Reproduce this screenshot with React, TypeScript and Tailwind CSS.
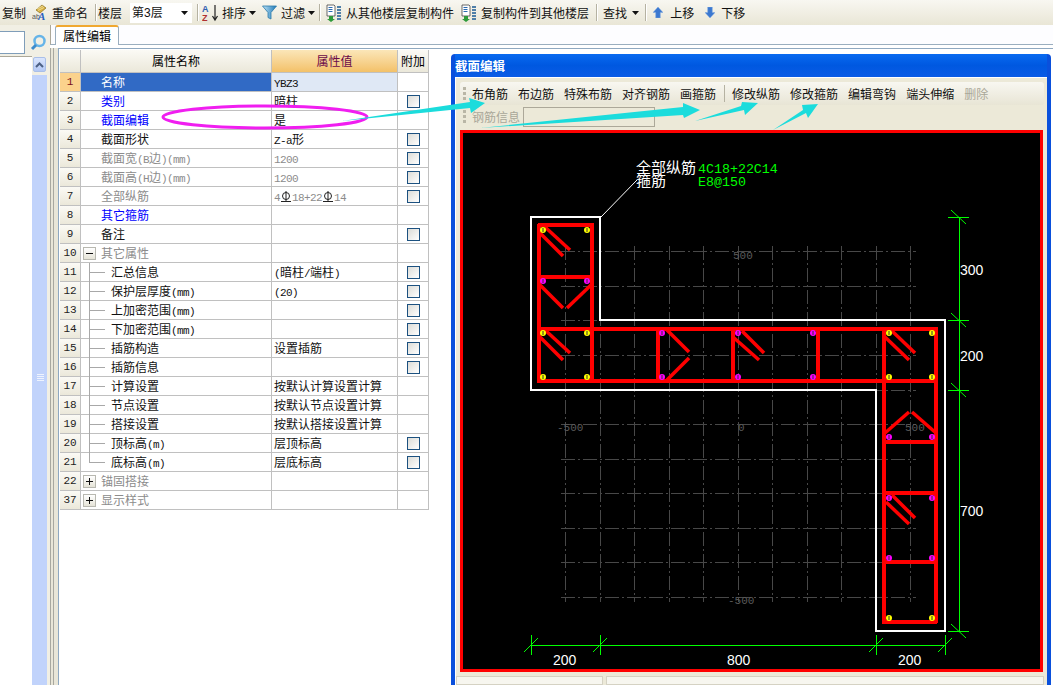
import React from "react";

const FONT = "font-['Noto_Sans_CJK_SC','Liberation_Sans',sans-serif]";

function T({ children }: { children: string }) {
  const parts = children.split(/([\x00-\x7f]+)/).filter(Boolean);
  return (
    <>
      {parts.map((p, i) =>
        /^[\x00-\x7f]+$/.test(p) ? (
          <span key={i} className="font-['Liberation_Mono',monospace] text-[11px] tracking-[-0.6px]">{p}</span>
        ) : (
          <span key={i}>{p}</span>
        )
      )}
    </>
  );
}

const Sep = ({ className = "" }: { className?: string }) => (
  <div className={`h-[17px] w-[2px] border-l border-r border-l-[#b5b2a2] border-r-white ${className}`} />
);
const Caret = ({ className = "" }: { className?: string }) => (
  <svg width="7" height="4" viewBox="0 0 7 4" className={className}><path d="M0 0h7L3.5 4z" fill="#111" /></svg>
);

const RenameIcon = () => (
  <svg width="17" height="17" viewBox="0 0 17 17">
    <path d="M4 6 10 1l4 3-6 5z" fill="#d9b040" stroke="#8a7020" strokeWidth=".7" />
    <path d="M5 5l6-3M6 6.500l6-3" stroke="#f3e6a8" strokeWidth=".8" />
    <text x="0" y="15" fontSize="7" fontFamily="Liberation Sans" fill="#555">ab</text>
    <text x="6" y="16" fontSize="11" fontWeight="700" fontStyle="italic" fontFamily="Liberation Serif" fill="#2860c0">A</text>
  </svg>
);
const SortIcon = () => (
  <svg width="17" height="18" viewBox="0 0 17 18">
    <text x="0" y="8" fontSize="9" fontWeight="700" fontFamily="Liberation Sans" fill="#3060b0">A</text>
    <text x="0" y="17" fontSize="9" fontWeight="700" fontFamily="Liberation Sans" fill="#b03030">Z</text>
    <path d="M13 1v14M10.500 12l2.500 4 2.500-4" stroke="#222" strokeWidth="1.200" fill="none" />
  </svg>
);
const FilterIcon = () => (
  <svg width="15" height="15" viewBox="0 0 15 15">
    <defs>
      <linearGradient id="fg" x1="0" x2="1"><stop offset="0" stopColor="#bfe4f6" /><stop offset="1" stopColor="#1d78b8" /></linearGradient>
    </defs>
    <path d="M.5 1h14L9 7.500V14l-3-1.500v-5z" fill="url(#fg)" stroke="#2a79a8" strokeWidth=".8" />
  </svg>
);
const CopyIcon = () => (
  <svg width="16" height="18" viewBox="0 0 16 18">
    <path d="M1 1h7l1 1v10H1z" fill="#fff" stroke="#444" strokeWidth=".8" />
    <path d="M2.500 3.500h4M2.500 5.500h4M2.500 7.500h4" stroke="#2a6ab0" />
    <path d="M3 12h4v3h2l-4 3-4-3h2z" fill="#2d9a3a" />
    <path d="M11 3h4M11 6h4M11 9h4M11 12h4M11 15h4" stroke="#4f7fa8" strokeWidth="2" />
  </svg>
);
const ArrowIcon = ({ down }: { down?: boolean }) => (
  <svg width="10" height="11" viewBox="0 0 10 11" style={{ transform: down ? "rotate(180deg)" : undefined }}>
    <path d="M5 0l5 5.500H7.300V11H2.700V5.500H0z" fill="#3b78d0" stroke="#7fa8e0" strokeWidth=".5" />
  </svg>
);

function Toolbar() {
  return (
    <div className="h-[25px] shrink-0 flex items-center bg-gradient-to-b from-[#f8f7f1] to-[#e9e6d6] text-[12px] text-[#111] whitespace-nowrap">
      <span className="ml-[2px]">复制</span>
      <span className="ml-[6px] flex"><RenameIcon /></span>
      <span className="ml-[3px]">重命名</span>
      <Sep className="ml-[7px]" />
      <span className="ml-[1px]">楼层</span>
      <div className="ml-[8px] w-[62px] h-[20px] bg-white flex items-center justify-between pl-[2px] pr-[4px]">
        <span>第<span className="font-['Liberation_Sans']">3</span>层</span>
        <Caret />
      </div>
      <Sep className="ml-[5px]" />
      <span className="ml-[3px] flex"><SortIcon /></span>
      <span className="ml-[3px]">排序</span>
      <Caret className="ml-[3px]" />
      <span className="ml-[6px] flex"><FilterIcon /></span>
      <span className="ml-[4px]">过滤</span>
      <Caret className="ml-[3px]" />
      <Sep className="ml-[4px]" />
      <span className="ml-[5px] flex"><CopyIcon /></span>
      <span className="ml-[4px]">从其他楼层复制构件</span>
      <span className="ml-[7px] flex"><CopyIcon /></span>
      <span className="ml-[4px]">复制构件到其他楼层</span>
      <Sep className="ml-[7px]" />
      <span className="ml-[5px]">查找</span>
      <Caret className="ml-[5px]" />
      <Sep className="ml-[6px]" />
      <span className="ml-[6px] flex"><ArrowIcon /></span>
      <span className="ml-[7px]">上移</span>
      <span className="ml-[11px] flex"><ArrowIcon down /></span>
      <span className="ml-[6px]">下移</span>
    </div>
  );
}

function LeftPanel() {
  return (
    <div className="w-[50px] shrink-0 flex flex-col bg-[#f1efe4]">
      <div className="h-[31px] shrink-0 flex items-end pb-[2px]">
        <div className="w-[25px] h-[23px] bg-white border border-l-0 border-[#7f9db9]" />
        <svg width="17" height="17" viewBox="0 0 17 17" className="ml-[5px] mb-[3px]">
          <circle cx="9.500" cy="7" r="5" fill="none" stroke="#66b4e8" strokeWidth="2.500" />
          <path d="M6 11l-4 4" stroke="#3d8ccc" strokeWidth="3" />
        </svg>
      </div>
      <div className="flex-1 flex min-h-0">
        <div className="w-[32px] bg-white border-t border-[#aca899]" />
        <div className="w-[15px] flex flex-col pt-[1px] gap-[3px]">
          <div className="h-[15px] mx-[1px] rounded-[2px] bg-gradient-to-b from-[#dbe6fd] to-[#b3c8f5] border border-[#a9bfe8] flex items-center justify-center">
            <svg width="9" height="6" viewBox="0 0 9 6"><path d="M1 5l3.500-3.500L8 5" fill="none" stroke="#4d6185" strokeWidth="2" /></svg>
          </div>
          <div className="flex-1 bg-[#c1d3fb] flex items-center justify-center pl-[1px]">
            <div className="w-[7px] flex flex-col gap-[1px] mt-[-6px]">
              {[0, 1, 2, 3].map((i) => <div key={i} className="h-px bg-[#eef3fe]" />)}
            </div>
          </div>
        </div>
      </div>
    </div>
  );
}

type Row = {
  n: number;
  name: string;
  val?: React.ReactNode;
  c?: "blue" | "gray" | "black";
  vc?: "gray";
  check?: boolean;
  kind?: "child" | "last" | "minus" | "plus";
  sel?: boolean;
};

const Rebar = () => (
  <svg width="10" height="12" viewBox="0 0 10 12" className="inline-block mx-[1px] align-[-2px]">
    <circle cx="5" cy="5" r="3.500" fill="none" stroke="#222" />
    <path d="M5 0v10M0 10.500h10" stroke="#222" />
  </svg>
);

const rows: Row[] = [
  { n: 1, name: "名称", val: "YBZ3", sel: true },
  { n: 2, name: "类别", val: "暗柱", c: "blue", check: true },
  { n: 3, name: "截面编辑", val: "是", c: "blue" },
  { n: 4, name: "截面形状", val: "Z-a形", check: true },
  { n: 5, name: "截面宽(B边)(mm)", val: "1200", c: "gray", vc: "gray", check: true },
  { n: 6, name: "截面高(H边)(mm)", val: "1200", c: "gray", vc: "gray", check: true },
  { n: 7, name: "全部纵筋", val: <>4<Rebar />18+22<Rebar />14</>, c: "gray", vc: "gray", check: true },
  { n: 8, name: "其它箍筋", c: "blue" },
  { n: 9, name: "备注", check: true },
  { n: 10, name: "其它属性", c: "gray", kind: "minus" },
  { n: 11, name: "汇总信息", val: "(暗柱/端柱)", check: true, kind: "child" },
  { n: 12, name: "保护层厚度(mm)", val: "(20)", check: true, kind: "child" },
  { n: 13, name: "上加密范围(mm)", check: true, kind: "child" },
  { n: 14, name: "下加密范围(mm)", check: true, kind: "child" },
  { n: 15, name: "插筋构造", val: "设置插筋", check: true, kind: "child" },
  { n: 16, name: "插筋信息", check: true, kind: "child" },
  { n: 17, name: "计算设置", val: "按默认计算设置计算", kind: "child" },
  { n: 18, name: "节点设置", val: "按默认节点设置计算", kind: "child" },
  { n: 19, name: "搭接设置", val: "按默认搭接设置计算", kind: "child" },
  { n: 20, name: "顶标高(m)", val: "层顶标高", check: true, kind: "child" },
  { n: 21, name: "底标高(m)", val: "层底标高", check: true, kind: "last" },
  { n: 22, name: "锚固搭接", c: "gray", kind: "plus" },
  { n: 37, name: "显示样式", c: "gray", kind: "plus" },
];

const Check = () => (
  <div className="w-[13px] h-[13px] border border-[#1c5180] bg-gradient-to-br from-[#dcdcd7] to-white" />
);

const Box = ({ plus }: { plus?: boolean }) => (
  <div className="absolute left-[2px] top-[3px] w-[13px] h-[13px] border border-[#b8b8b0] bg-gradient-to-b from-white to-[#e6e4d8] flex items-center justify-center">
    <svg width="9" height="9" viewBox="0 0 9 9">
      <path d={plus ? "M1 4.500h7M4.500 1v7" : "M1 4.500h7"} stroke="#111" />
    </svg>
  </div>
);

function PropTable() {
  return (
    <div className="w-[369px] text-[12px] leading-[18px]">
      <div className="flex h-[23px] border-b border-[#c0c0c0]">
        <div className="w-[21px] shrink-0 border-r border-[#c0c0c0] bg-gradient-to-b from-[#fbfaf5] to-[#ebe8da]" />
        <div className="w-[191px] shrink-0 border-r border-[#c0c0c0] bg-gradient-to-b from-[#fbfaf5] to-[#ebe8da] flex items-center justify-center">属性名称</div>
        <div className="w-[125px] shrink-0 bg-gradient-to-b from-[#fbe6b8] to-[#f3c168] flex items-center justify-center text-[#6a0a4a]">属性值</div>
        <div className="w-[32px] shrink-0 border-x border-[#c0c0c0] bg-gradient-to-b from-[#fbfaf5] to-[#ebe8da] flex items-center justify-center">附加</div>
      </div>
      {rows.map((r) => {
        const tree = r.kind === "child" || r.kind === "last";
        const color = r.sel ? "text-white" : r.c === "blue" ? "text-[#0000ff]" : r.c === "gray" ? "text-[#8c8c8c]" : "text-[#111]";
        return (
          <div key={r.n} className="flex h-[19px] border-b border-[#c0c0c0]">
            <div className={`w-[21px] shrink-0 border-r border-[#c0c0c0] flex items-center justify-center font-['Liberation_Mono',monospace] text-[11px] ${r.sel ? "bg-[#fbd28c] text-[#7a1020]" : "bg-gradient-to-b from-[#fbfaf5] to-[#ebe8da] text-[#222]"}`}>{r.n}</div>
            <div className={`relative w-[191px] shrink-0 border-r border-[#c0c0c0] whitespace-nowrap ${color} ${r.sel ? "bg-[#316ac5]" : "bg-white"} ${tree ? "pl-[30px]" : "pl-[20px]"}`}>
              {r.kind === "minus" && <Box />}
              {r.kind === "plus" && <Box plus />}
              {tree && (
                <>
                  <div className={`absolute left-[8px] top-0 w-px bg-[#a8a8a8] ${r.kind === "last" ? "h-[9px]" : "h-[19px]"}`} />
                  <div className="absolute left-[8px] top-[9px] w-[16px] h-px bg-[#a8a8a8]" />
                </>
              )}
              <T>{r.name}</T>
            </div>
            <div className={`w-[125px] shrink-0 pl-[2px] whitespace-nowrap ${r.sel ? "bg-[#dfe8f5]" : "bg-white"} ${r.vc === "gray" ? "text-[#8c8c8c]" : "text-[#111]"}`}>
              {typeof r.val === "string" ? <T>{r.val}</T> : <span className="font-['Liberation_Mono',monospace] text-[11px] tracking-[-0.6px]">{r.val}</span>}
            </div>
            <div className="w-[32px] shrink-0 border-x border-[#c0c0c0] flex items-center justify-start pl-[9px]">
              {r.check && <Check />}
            </div>
          </div>
        );
      })}
    </div>
  );
}

const gridX = [565, 600, 634, 669, 703, 738, 772, 807, 841, 876, 910];
const gridY = [251, 286, 320, 355, 390, 424, 459, 493, 528, 562, 597];

const ties: [number, number, number, number][] = [
  [539, 225, 592, 225], [539, 225, 539, 381], [592, 225, 592, 381], [539, 277, 592, 277],
  [539, 329, 936, 329], [539, 381, 936, 381], [658, 329, 658, 381], [733, 329, 733, 381], [818, 331, 818, 379],
  [884, 329, 884, 622], [936, 329, 936, 622], [884, 442, 936, 442], [884, 493, 936, 493], [884, 562, 936, 562], [884, 622, 936, 622],
];
const hooks: [number, number, number, number][] = [
  [545, 227, 570, 250], [539, 232, 563, 256], [540, 285, 563, 308], [591, 285, 567, 308],
  [545, 330, 570, 353], [539, 336, 563, 360], [667, 330, 689, 352], [689, 358, 667, 380],
  [742, 331, 764, 353], [733, 337, 759, 360], [892, 331, 915, 353], [885, 337, 909, 360],
  [885, 433, 909, 412], [936, 433, 912, 412], [892, 495, 915, 518], [886, 502, 909, 524],
];
const yellow = [[543, 230], [587, 230], [543, 333], [587, 333], [543, 377], [587, 377], [889, 333], [932, 333], [889, 377], [932, 377], [889, 618], [932, 618]];
const magenta = [[543, 281], [587, 281], [662, 333], [662, 377], [738, 333], [738, 377], [813, 333], [813, 377], [889, 437], [932, 437], [889, 498], [932, 498], [889, 558], [932, 558]];

function Drawing() {
  const num = { fontFamily: "Liberation Sans", fontSize: 14, fill: "#fff" };
  const small = { fontFamily: "Liberation Mono", fontSize: 11, fill: "#5a5a5a" };
  return (
    <svg viewBox="463 133 577 536" className="block w-[577px] h-[536px]" shapeRendering="crispEdges">
      <g stroke="#484848" strokeDasharray="14 3 2 3">
        {gridX.map((x) => <line key={x} x1={x + 0.5} y1={246} x2={x + 0.5} y2={602} />)}
        {gridY.map((y) => <line key={y} x1={561} y1={y + 0.5} x2={916} y2={y + 0.5} />)}
      </g>
      <text x="733" y="259" {...small}>500</text>
      <text x="557" y="431" {...small}>-500</text>
      <text x="738" y="431" {...small}>0</text>
      <text x="905" y="431" {...small}>500</text>
      <text x="728" y="604" {...small}>-500</text>

      <path d="M531 217H600V320H945V631H876V390H531Z" fill="none" stroke="#fff" strokeWidth="2" />
      <path d="M601 217 637 180" stroke="#fff" shapeRendering="auto" />

      <g stroke="#ff0000" strokeWidth="4" strokeLinecap="round">
        {ties.map((l, i) => <line key={i} x1={l[0]} y1={l[1]} x2={l[2]} y2={l[3]} />)}
      </g>
      <g stroke="#ff0000" strokeWidth="3.500" shapeRendering="auto">
        {hooks.map((l, i) => <line key={i} x1={l[0]} y1={l[1]} x2={l[2]} y2={l[3]} />)}
      </g>
      <g shapeRendering="auto">
        {yellow.map(([x, y], i) => (
          <g key={i}><circle cx={x} cy={y} r="3" fill="#ffff00" /><path d={`M${x} ${y - 2}v4`} stroke="#333" /></g>
        ))}
        {magenta.map(([x, y], i) => (
          <g key={i}><circle cx={x} cy={y} r="3" fill="#ff00ff" /><path d={`M${x} ${y - 2}v4`} stroke="#333" /></g>
        ))}
      </g>

      <g stroke="#00ff00">
        <line x1="959.500" y1="217" x2="959.500" y2="631" />
        {[217, 320, 390, 631].map((y) => (
          <g key={y}>
            <line x1="948" y1={y + 0.5} x2="969" y2={y + 0.5} />
            <line x1="951" y1={y - 7} x2="966" y2={y + 7} shapeRendering="auto" />
          </g>
        ))}
        <line x1="531" y1="645.500" x2="945" y2="645.500" />
        {[531, 600, 876, 945].map((x) => (
          <g key={x}>
            <line x1={x + 0.5} y1="635" x2={x + 0.5} y2="655" />
            <line x1={x - 7} y1="652" x2={x + 7} y2="638" shapeRendering="auto" />
          </g>
        ))}
      </g>

      <text x="960" y="275" {...num}>300</text>
      <text x="960" y="361" {...num}>200</text>
      <text x="960" y="516" {...num}>700</text>
      <text x="553" y="665" {...num}>200</text>
      <text x="727" y="665" {...num}>800</text>
      <text x="898" y="665" {...num}>200</text>

      <text x="636" y="173" fontFamily="Noto Sans CJK SC" fontSize="15" fill="#fff">全部纵筋</text>
      <text x="636" y="186" fontFamily="Noto Sans CJK SC" fontSize="15" fill="#fff">箍筋</text>
      <text x="698" y="173" fontFamily="Liberation Mono" fontSize="13.300" fill="#00ff00">4C18+22C14</text>
      <text x="698" y="186" fontFamily="Liberation Mono" fontSize="13.300" fill="#00ff00">E8@150</text>
    </svg>
  );
}

function SectionDialog() {
  const items = ["布角筋", "布边筋", "特殊布筋", "对齐钢筋", "画箍筋"];
  const items2 = ["修改纵筋", "修改箍筋", "编辑弯钩", "端头伸缩"];
  return (
    <div className="absolute left-[451px] top-[54px] w-[600px] h-[631px] flex flex-col border-x-[4px] border-[#0a50dc] rounded-t-[4px] text-[12px] overflow-hidden">
      <div className="h-[23px] shrink-0 bg-gradient-to-b from-[#0a6af0] via-[#0058e0] to-[#0a5be6] flex items-center text-white font-bold text-[12.500px] pt-[1px]">截面编辑</div>
      <div className="flex-1 min-h-0 flex flex-col bg-[#ece9d8] border-l border-t border-white pl-[4px] pr-[3px] pt-[4px]">
        <div className="h-[23px] shrink-0 flex items-center pl-[3px] rounded-[3px] bg-gradient-to-b from-[#f8f7f1] to-[#e8e5d5] whitespace-nowrap text-[#111]">
          <div className="w-[3px] h-[13px] border-l-[3px] border-dotted border-[#b9b6a6] mr-[6px]" />
          <div className="flex items-center gap-[10px]">
            {items.map((s) => <span key={s}>{s}</span>)}
          </div>
          <Sep className="ml-[8px] mr-[7px] !border-r-0 !w-px" />
          <div className="flex items-center gap-[10px]">
            {items2.map((s) => <span key={s}>{s}</span>)}
            <span className="text-[#a9a798]">删除</span>
          </div>
        </div>
        <div className="h-[23px] shrink-0 flex items-center pl-[3px] text-[#a9a798] whitespace-nowrap">
          <div className="w-[3px] h-[13px] border-l-[3px] border-dotted border-[#b9b6a6] mr-[6px]" />
          <span>钢筋信息</span>
          <div className="ml-[3px] w-[132px] h-[20px] border border-[#aca899] bg-[#ece9d8]" />
        </div>
        <div className="mt-[2px] w-[583px] h-[542px] shrink-0 border-[3px] border-[#ff0000] bg-black">
          <Drawing />
        </div>
        <div className="mt-[4px] flex-1 flex gap-[3px] ml-[-4px]">
          <div className="w-[147px] bg-[#f7f6ef] border border-[#d5d2c3]" />
          <div className="flex-1 bg-[#f7f6ef] border border-[#d5d2c3]" />
        </div>
      </div>
    </div>
  );
}

function Annotations() {
  return (
    <svg viewBox="0 0 1053 685" className="absolute left-0 top-0 w-[1053px] h-[685px] pointer-events-none">
      <ellipse cx="265" cy="117" rx="102" ry="11" fill="none" stroke="#f01ef0" strokeWidth="3" />
      <g fill="#1bdcdc">
        <polygon points="342,121 470,102 469,98 485,103 471,113 470,108" />
        <polygon points="480,128 683,107 683,103 700,110 684,118 683,115" />
        <polygon points="695,121 741,106 742,102 758,103 745,115 744,110" />
        <polygon points="773,130 803,110 802,105 818,104 808,118 806,113" />
      </g>
    </svg>
  );
}

export default function App() {
  return (
    <div className={`relative w-[1053px] h-[685px] overflow-hidden bg-white flex flex-col ${FONT}`}>
      <Toolbar />
      <div className="flex-1 min-h-0 flex">
        <LeftPanel />
        <div className="flex-1 min-w-0 flex flex-col">
          <div className="h-[20px] shrink-0 flex items-end pl-[4px] bg-[#fdfdff] border-b border-[#9aaebf] border-l border-l-[#aca899]">
            <div className="w-[64px] h-[20px] mb-[-1px] rounded-t-[3px] bg-white border border-[#9aaebf] border-b-0 border-t-2 border-t-[#f0a830] flex items-center justify-center text-[12px]">属性编辑</div>
          </div>
          <div className="h-[3px] shrink-0 bg-white" />
          <div className="flex-1 min-h-0 flex">
            <div className="w-[8px] shrink-0 bg-[#e9e6d8] border-l border-[#a8a8a0] flex">
              <div className="w-[3px] border-r border-[#a8a8a0]" />
            </div>
            <div className="flex-1 min-w-0 bg-white border-l border-t border-[#8fa8c0] pl-[1px] pt-[1px]">
              <PropTable />
            </div>
          </div>
        </div>
      </div>
      <SectionDialog />
      <Annotations />
    </div>
  );
}
